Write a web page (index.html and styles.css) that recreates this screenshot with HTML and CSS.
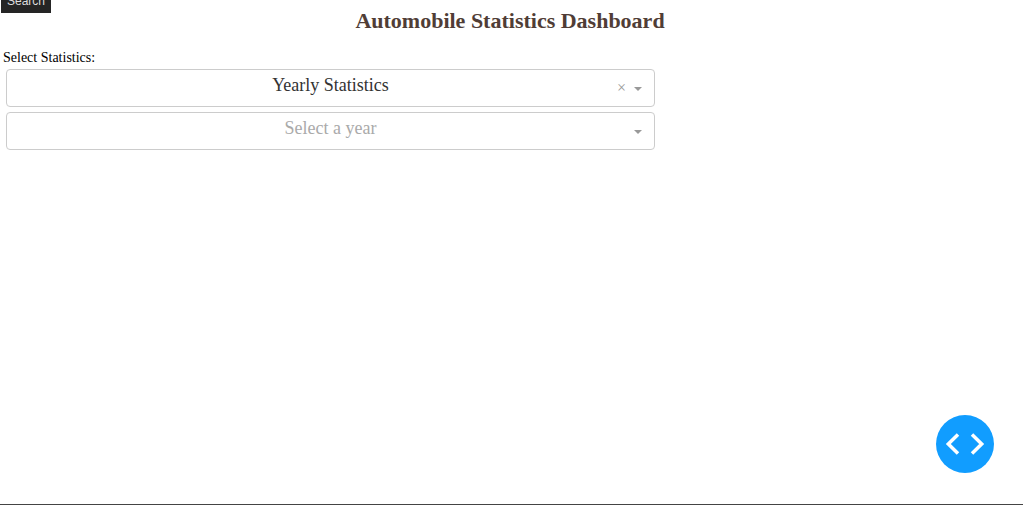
FILE: index.html
```html
<!DOCTYPE html>
<html lang="en">
<head>
<meta charset="utf-8">
<title>Automobile Statistics Dashboard</title>
<link rel="stylesheet" href="styles.css">
</head>
<body>
<div class="search-tip" role="tooltip">Search</div>
<main class="dashboard">
  <h1 class="title">Automobile Statistics Dashboard</h1>
  <label class="field-label" for="statistics">Select Statistics:</label>
  <div class="fields">
    <div class="field">
      <select class="select" id="statistics">
        <option selected>Yearly Statistics</option>
      </select>
      <button class="clear" type="button" aria-label="Clear value">×</button>
      <span class="arrow"></span>
    </div>
    <div class="field">
      <select class="select placeholder" aria-label="Select a year">
        <option selected>Select a year</option>
      </select>
      <span class="arrow"></span>
    </div>
  </div>
</main>
<button class="debug" type="button" aria-label="Developer tools">
  <svg class="debug-icon" viewBox="0 0 58 58" aria-hidden="true">
    <path d="M22 19.5 12.3 29l9.7 9.5M36 19.5l9.7 9.5-9.7 9.5" fill="none" stroke="#fff" stroke-width="3.5"/>
  </svg>
</button>
</body>
</html>
```

FILE: styles.css
```css
* {
  box-sizing: border-box;
}

body {
  margin: 0;
  background: #fff;
  font-family: "Liberation Serif", "Times New Roman", serif;
}

.search-tip {
  position: absolute;
  top: -11px;
  left: 1px;
  padding: 4px 6px;
  background: #252525;
  color: #ddd;
  font: 12px/16px "Liberation Sans", Arial, sans-serif;
}

.dashboard {
  min-height: 100vh;
  padding: 8px 6px 0 3px;
  border-bottom: 1px solid #444;
}

.title {
  margin: 0 0 16px;
  color: #503d36;
  font-size: 22px;
  line-height: 26px;
  text-align: center;
}

.field-label {
  display: block;
  font-size: 14px;
  line-height: 16px;
}

.fields {
  display: flex;
  flex-direction: column;
  gap: 5px;
  width: 64%;
  margin: 3px 0 0 3px;
}

.field {
  position: relative;
}

.select {
  display: block;
  width: 100%;
  height: 38px;
  padding: 0 0 6px;
  border: 1px solid #ccc;
  border-radius: 4px;
  appearance: none;
  background: #fff;
  color: #333;
  font: 18px/30px "Liberation Serif", "Times New Roman", serif;
  text-align: center;
  text-align-last: center;
}

.placeholder {
  color: #aaa;
}

.clear {
  position: absolute;
  top: 10px;
  right: 25px;
  width: 17px;
  height: 18px;
  padding: 0;
  border: 0;
  background: none;
  color: #999;
  font: 16px/18px "Liberation Serif", "Times New Roman", serif;
}

.arrow {
  position: absolute;
  top: 18px;
  right: 13px;
  border: 4px solid transparent;
  border-top-color: #999;
  border-bottom: 0;
  pointer-events: none;
}

.debug {
  position: fixed;
  right: 29px;
  bottom: 32px;
  width: 58px;
  height: 58px;
  padding: 0;
  border: 0;
  border-radius: 50%;
  background: #119dff;
}

.debug-icon {
  display: block;
  width: 100%;
  height: 100%;
}
```
